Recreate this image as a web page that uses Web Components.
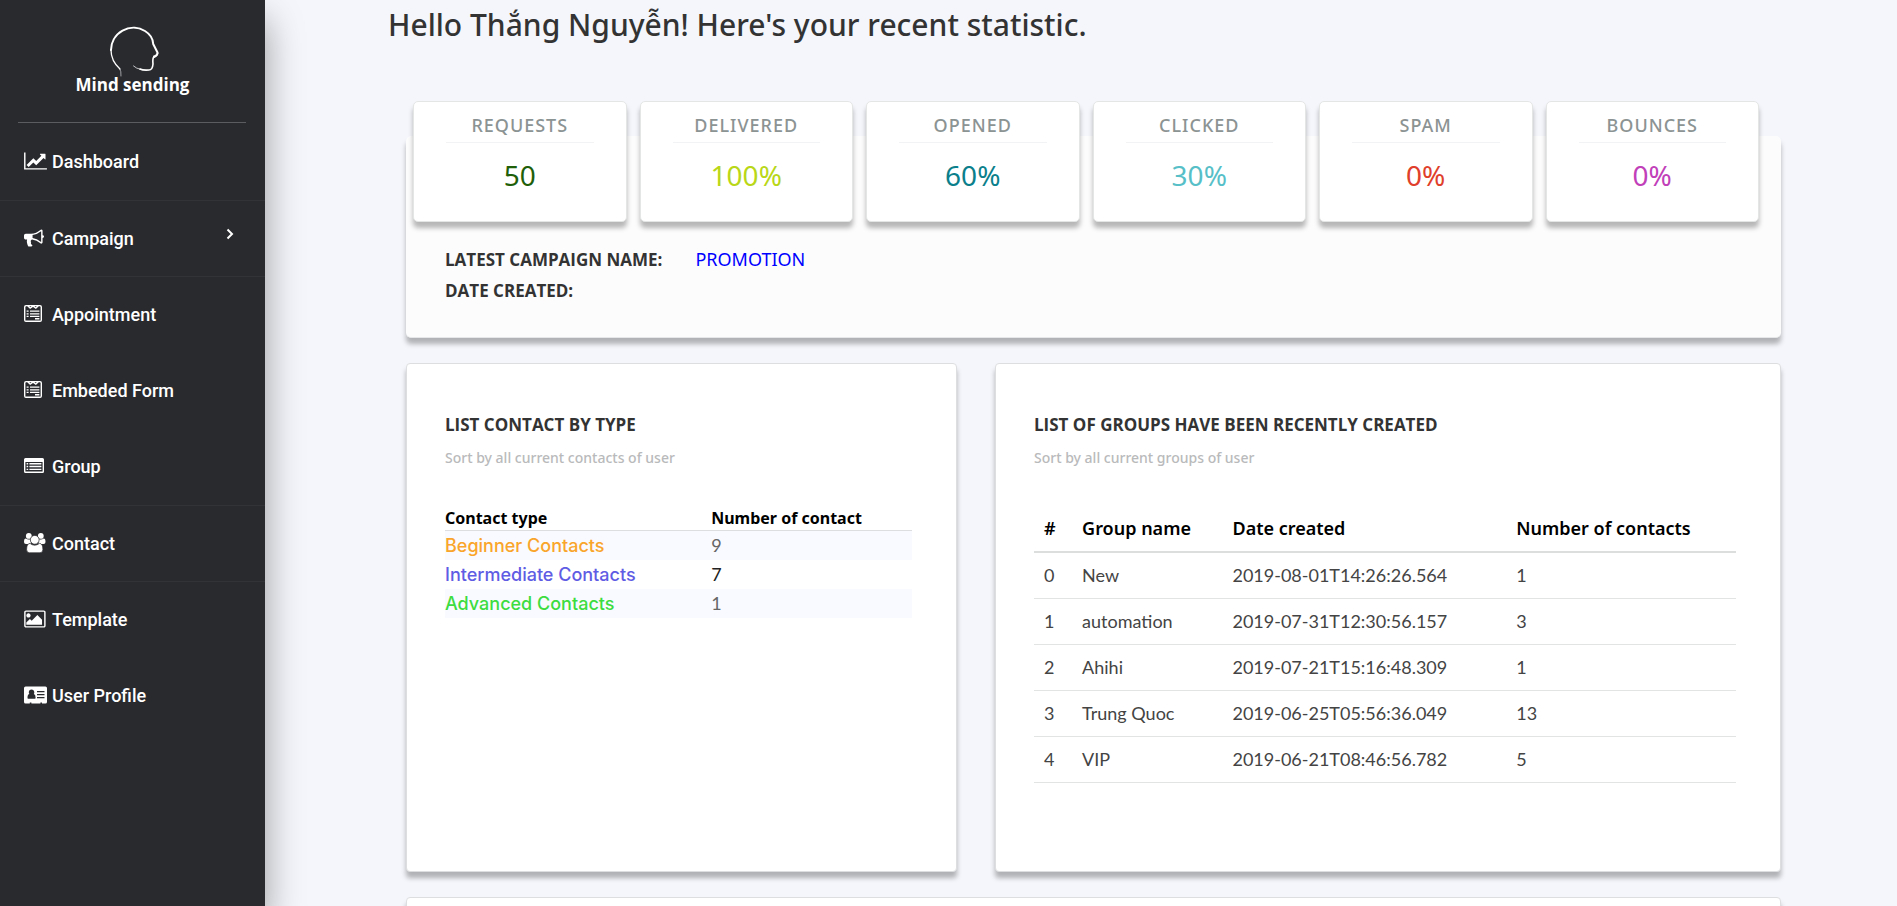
<!DOCTYPE html>
<html lang="en">
<head>
<meta charset="utf-8">
<meta name="viewport" content="width=device-width, initial-scale=1">
<title>Mind sending – Dashboard</title>
<style>
  body { margin: 0; background: #f4f6fb; font-family: "Open Sans", "Noto Sans", sans-serif; color: #333; }
</style>
</head>
<body>
<ms-app>
  <ms-sidebar slot="side">
    <ms-nav-item icon="chart">Dashboard</ms-nav-item>
    <ms-nav-item icon="horn" divided expandable>Campaign</ms-nav-item>
    <ms-nav-item icon="form">Appointment</ms-nav-item>
    <ms-nav-item icon="form">Embeded Form</ms-nav-item>
    <ms-nav-item icon="list">Group</ms-nav-item>
    <ms-nav-item icon="users" divided>Contact</ms-nav-item>
    <ms-nav-item icon="picture">Template</ms-nav-item>
    <ms-nav-item icon="card">User Profile</ms-nav-item>
  </ms-sidebar>
  <span slot="title">Hello Thắng Nguyễn! Here's your recent statistic.</span>
  <ms-summary>
    <ms-stat slot="stats" label="REQUESTS" style="--tone:#1f5f0a">50</ms-stat>
    <ms-stat slot="stats" label="DELIVERED" style="--tone:#b9d717">100%</ms-stat>
    <ms-stat slot="stats" label="OPENED" style="--tone:#0b7f8b">60%</ms-stat>
    <ms-stat slot="stats" label="CLICKED" style="--tone:#57bfc8">30%</ms-stat>
    <ms-stat slot="stats" label="SPAM" style="--tone:#e0402b">0%</ms-stat>
    <ms-stat slot="stats" label="BOUNCES" style="--tone:#c13fb9">0%</ms-stat>
    <a slot="campaign" href="#promotion">PROMOTION</a>
  </ms-summary>
  <ms-columns>
    <ms-card heading="LIST CONTACT BY TYPE" note="Sort by all current contacts of user"><ms-contact-table></ms-contact-table></ms-card>
    <ms-card heading="LIST OF GROUPS HAVE BEEN RECENTLY CREATED" note="Sort by all current groups of user"><ms-group-table></ms-group-table></ms-card>
  </ms-columns>
  <ms-card></ms-card>
</ms-app>

<script>
const define = (name, render) => customElements.define(name, class extends HTMLElement {
  constructor() { super(); this.attachShadow({ mode: "open" }); }
  connectedCallback() { this.shadowRoot.innerHTML = render(this); }
});

const ICONS = {
  chart: `<svg width="23" height="20" viewBox="0 0 2048 1792"><path d="M2048 1536v128h-2048v-1536h128v1408h1920zM1920 288v435q0 21-19.5 29.5t-35.5-7.5l-121-121-633 633q-10 10-23 10t-23-10l-233-233-416 416-192-192 585-585q10-10 23-10t23 10l233 233 464-464-121-121q-16-16-7.5-35.5t29.5-19.5h435q14 0 23 9t9 23z"/></svg>`,
  horn: `<svg width="20" height="20" viewBox="0 0 1792 1792"><path d="M1664 640q53 0 90.500 37.500t37.500 90.500-37.500 90.500-90.500 37.500v384q0 52-38 90t-90 38q-417-347-812-380-58 19-91 66t-31 100.500 40 92.500q-20 33-23 65.500t6 58 33.500 55 48 50 61.500 50.500q-29 58-111.500 83t-168.500 11.500-132-55.500q-7-23-29.500-87.500t-32-94.500-23-89-15-101 3.500-98.500 22-110.500h-122q-66 0-113-47t-47-113v-192q0-66 47-113t113-47h480q435 0 896-384 52 0 90 38t38 90v384zm-128 604v-954q-394 302-768 343v270q377 42 768 341z"/></svg>`,
  form: `<svg width="18" height="20" viewBox="0 0 18 20"><path fill-rule="evenodd" d="M2 1h14a2 2 0 0 1 2 2v13a2 2 0 0 1-2 2H2a2 2 0 0 1-2-2V3a2 2 0 0 1 2-2zm0 1.300L1.400 3v13.500h15.200V3l-.6-.7h-1.200L11.900 5 9 2.900 6.100 5 3.200 2.300zM5.300 2.300l1 .9 1.200-.9zM10.500 2.300l1.200.9 1-.9z"/><path d="M2.600 6.600h2v1.200h-2zM6 6.600h9.400v1.200H6zM2.600 9.200h2v1.200h-2zM6 9.200h9.400v1.200H6zM6 11.800h9.400V13H6zM2.600 11.800h2V13h-2zM11 14h4.400v1.500H11z"/></svg>`,
  list: `<svg width="20" height="20" viewBox="0 0 20 20"><path fill-rule="evenodd" d="M1.500 2h17A1.500 1.500 0 0 1 20 3.500v12a1.500 1.500 0 0 1-1.500 1.500h-17A1.500 1.500 0 0 1 0 15.500v-12A1.500 1.500 0 0 1 1.500 2zM1.400 6v9.600h17.200V6z"/><path d="M2.600 7h1.600v1.400H2.600zM5.400 7h12v1.400h-12zM2.600 9.800h1.600v1.400H2.600zM5.400 9.800h12v1.400h-12zM2.600 12.700h1.600V14H2.600zM5.400 12.700h12V14h-12z"/></svg>`,
  users: `<svg width="21" height="20" viewBox="0 0 21 20"><circle cx="4.800" cy="2.900" r="2.900"/><circle cx="16.800" cy="2.900" r="2.900"/><path d="M0 9Q0 5.600 1.800 5.600Q4 7 6.500 6.200L7 11H2Q0 11 0 9zM21.500 9Q21.500 5.600 19.700 5.600Q17.500 7 15 6.200L14.500 11h5Q21.500 11 21.500 9z"/><g stroke="#292a2e" stroke-width=".7"><circle cx="10.750" cy="6.800" r="4.400"/><path d="M2.600 16.500Q2.600 10.500 6 10.400Q10.700 14 15.500 10.400Q18.900 10.500 18.900 16.500Q18.900 19.800 16 19.800H5.500Q2.600 19.800 2.600 16.500z"/></g></svg>`,
  picture: `<svg width="22" height="20" viewBox="0 0 1940 1792"><path d="M576 576q0 80-56 136t-136 56-136-56-56-136 56-136 136-56 136 56 56 136zm1024 384v448h-1408v-192l320-320 160 160 512-512zm160-704h-1600q-13 0-22.500 9.500t-9.500 22.500v1216q0 13 9.500 22.500t22.500 9.500h1600q13 0 22.500-9.500t9.500-22.500v-1216q0-13-9.500-22.500t-22.500-9.500zm160 32v1216q0 66-47 113t-113 47h-1600q-66 0-113-47t-47-113v-1216q0-66 47-113t113-47h1600q66 0 113 47t47 113z"/></svg>`,
  card: `<svg width="23" height="20" viewBox="0 0 23 20"><path fill-rule="evenodd" d="M1.600 1.400h19.800A1.600 1.600 0 0 1 23 3v14a1.600 1.600 0 0 1-1.600 1.600H18v-1.200h-1.600v1.200h-9v-1.200H5.800v1.200H1.600A1.600 1.600 0 0 1 0 17V3a1.600 1.600 0 0 1 1.600-1.600zM4 13.700h7Q11.600 13.700 11.600 12.500Q11.500 9.300 9.800 9Q10.300 8.200 10.300 7.200Q10 4.500 7.500 4.500T4.800 7.200Q4.800 8.200 5.400 9Q3.600 9.300 3.500 12.500Q3.500 13.700 4 13.700zM13 6v1.200h7.500V6zM13 9v1.200h7.500V9zM13 12v1.200h7.500V12z"/></svg>`
};

define("ms-app", () => `
  <style>
    :host { display: flex; height: 100vh; overflow: hidden; }
    main { flex: 1; min-width: 0; padding: 5px 116px 0 141px; overflow: hidden; }
    h1 { margin: 0 0 91px -18px; font: 500 30px/40px "Noto Sans", sans-serif; color: #333; }
  </style>
  <slot name="side"></slot>
  <main><h1><slot name="title"></slot></h1><slot></slot></main>`);

define("ms-sidebar", () => `
  <style>
    :host { display: block; box-sizing: border-box; width: 265px; flex: none; padding-top: 24px; background: #292a2e;
      box-shadow: 0 20px 35px rgba(0,0,0,.38); position: relative; z-index: 1; }
    .brand { display: flex; flex-direction: column; align-items: center; color: #fff; text-decoration: none;
      font: 700 17px/20px "Open Sans", sans-serif; }
    svg { overflow: visible; fill: none; stroke: #fff; stroke-linecap: round; stroke-linejoin: round; }
    hr { margin: 27px 19px 1px 18px; border: 0; border-top: 1px solid #5b5c5f; }
  </style>
  <a class="brand" href="#home">
    <svg width="48" height="51" viewBox="109 24 48 51" aria-hidden="true">
      <path stroke-width=".8" opacity=".7" d="M121 76Q121.500 71 119.500 68.500"/>
      <path stroke-width="1.300" d="M120 69Q111 61 111 50"/>
      <path stroke-width="2" d="M111 50A22.500 22.500 0 0 1 145 31Q153 36 153.200 44L157.500 52.500Q158 55 154 56.500"/>
      <path stroke-width="1.600" d="M157.500 53Q157.500 56 153.500 57.500Q152.500 59 153 64Q152.500 70 149 70Q143 70.500 140 69"/>
      <path stroke-width=".9" opacity=".8" d="M141 69.500Q136 68.500 133.500 66"/>
    </svg>
    <span>Mind sending</span>
  </a>
  <hr>
  <nav><slot></slot></nav>`);

define("ms-nav-item", el => `
  <style>
    :host { display: block; }
    :host([divided]) { border: solid #323337; border-width: 1px 0; }
    a { display: flex; align-items: flex-start; padding: 26px 31px 26px 24px; color: #fff; text-decoration: none; font: 500 18px/24px Roboto, sans-serif; }
    :host([divided]) a { padding-bottom: 25px; }
    .icon { width: 28px; flex: none; }
    .icon svg { display: block; margin-top: 1px; fill: #fff; overflow: visible; }
    .label { flex: 1; }
    .more { fill: none; stroke: #fff; stroke-width: 2; }
  </style>
  <a href="#${el.textContent.trim().toLowerCase().replace(" ", "-")}">
    <span class="icon" aria-hidden="true">${ICONS[el.getAttribute("icon")]}</span>
    <span class="label"><slot></slot></span>
    ${el.hasAttribute("expandable") ? `<svg class="more" width="8" height="14" viewBox="0 0 8 14" aria-hidden="true"><path d="M1.500 2.500l4.500 4.500-4.500 4.500"/></svg>` : ""}
  </a>`);

define("ms-summary", () => `
  <style>
    :host { display: block; padding: 0 22px 31px 7px; background: #fcfcfc; border-radius: 5px; border-bottom: 1px solid #e6e7e8;
      box-shadow: 0 6px 5px rgba(0,0,0,.28); }
    .stats { display: grid; grid-template-columns: repeat(6, minmax(0, 1fr)); gap: 13px; position: relative; top: -35px; margin-bottom: -35px; }
    dl { display: grid; grid-template-columns: max-content 1fr; column-gap: 33px; margin: 22px 0 0 32px; font: 700 17px/31px "Open Sans", sans-serif; }
    dt, dd { margin: 0; }
    dt { grid-column: 1; }
    dd { font: 400 18px/31px "Noto Sans", sans-serif; }
    ::slotted(a) { color: #00f; text-decoration: none; }
  </style>
  <div class="stats"><slot name="stats"></slot></div>
  <dl><dt>LATEST CAMPAIGN NAME:</dt><dd><slot name="campaign"></slot></dd><dt>DATE CREATED:</dt></dl>`);

define("ms-stat", el => `
  <style>
    :host { display: block; padding: 11px 32px 27px; background: #fff; border: 1px solid #e4e6e6; border-radius: 5px;
      box-shadow: 0 6px 5px rgba(0,0,0,.28); text-align: center; }
    h2 { margin: 0 0 13px; padding-bottom: 5px; border-bottom: 1px solid #f2f3f4; font: 500 18px/24px "Noto Sans", sans-serif; letter-spacing: 1px; color: #8c9393; }
    p { margin: 0; font: 400 28px/38px "Noto Sans", sans-serif; color: var(--tone); }
  </style>
  <h2>${el.getAttribute("label")}</h2><p><slot></slot></p>`);

define("ms-columns", () => `
  <style>
    :host { display: grid; grid-template-columns: minmax(0, 551fr) minmax(0, 786fr); gap: 38px; margin: 25px 0; min-height: 509px; }
  </style><slot></slot>`);

define("ms-card", el => `
  <style>
    :host { display: block; padding: 49px 44px 48px 38px; background: #fff; border: 1px solid #dcdedf; border-radius: 4px;
      box-shadow: 0 6px 5px rgba(0,0,0,.28); }
    h2 { margin: 0 0 11px; font: 700 17px/24px "Open Sans", sans-serif; color: #333; }
    p { margin: 0 0 38px; font: 500 14px/20px "Noto Sans", sans-serif; color: #b9babb; }
  </style>
  ${el.hasAttribute("heading") ? `<h2>${el.getAttribute("heading")}</h2><p>${el.getAttribute("note")}</p>` : ""}
  <slot></slot>`);

define("ms-contact-table", () => `
  <style>
    :host { display: block; }
    table { width: 100%; table-layout: fixed; border-spacing: 0; }
    th, td { padding: 0; text-align: left; }
    th:first-child { width: 57%; }
    thead th { font: 700 16px/24px "Noto Sans", sans-serif; color: #000; border-bottom: 1px solid #dcdedf; }
    tbody th { font: 500 18px/29px Inter, sans-serif; color: var(--tone); }
    td { font: 400 18px/29px Lato, sans-serif; color: #222; vertical-align: top; }
    tbody tr:nth-child(odd) { background: #f9faff; }
    tbody tr:nth-child(odd) td { color: #666; }
  </style>
  <table>
    <thead><tr><th scope="col">Contact type</th><th scope="col">Number of contact</th></tr></thead>
    <tbody>
      <tr><th scope="row" style="--tone:#f9a52b">Beginner Contacts</th><td>9</td></tr>
      <tr><th scope="row" style="--tone:#605ce4">Intermediate Contacts</th><td>7</td></tr>
      <tr><th scope="row" style="--tone:#3ddc3f">Advanced Contacts</th><td>1</td></tr>
    </tbody>
  </table>`);

const GROUPS = [
  ["New", "2019-08-01T14:26:26.564", 1],
  ["automation", "2019-07-31T12:30:56.157", 3],
  ["Ahihi", "2019-07-21T15:16:48.309", 1],
  ["Trung Quoc", "2019-06-25T05:56:36.049", 13],
  ["VIP", "2019-06-21T08:46:56.782", 5]
];

define("ms-group-table", () => `
  <style>
    :host { display: block; }
    table { width: 100%; table-layout: fixed; border-spacing: 0; }
    th, td { padding: 10px 0 11px 10px; text-align: left; }
    th { font: 600 18px/24px "Noto Sans", sans-serif; color: #000; border-bottom: 2px solid #dcdddd; }
    td { font: 400 18px/24px Lato, sans-serif; color: #444; border-bottom: 1px solid #e2e3e3; }
    .id { width: 4%; } .name { width: 20%; } .date { width: 39%; }
  </style>
  <table>
    <thead><tr><th class="id" scope="col">#</th><th class="name" scope="col">Group name</th><th class="date" scope="col">Date created</th><th scope="col">Number of contacts</th></tr></thead>
    <tbody>${GROUPS.map((g, i) => `<tr><td>${i}</td>${g.map(v => `<td>${v}</td>`).join("")}</tr>`).join("")}</tbody>
  </table>`);
</script>
</body>
</html>
